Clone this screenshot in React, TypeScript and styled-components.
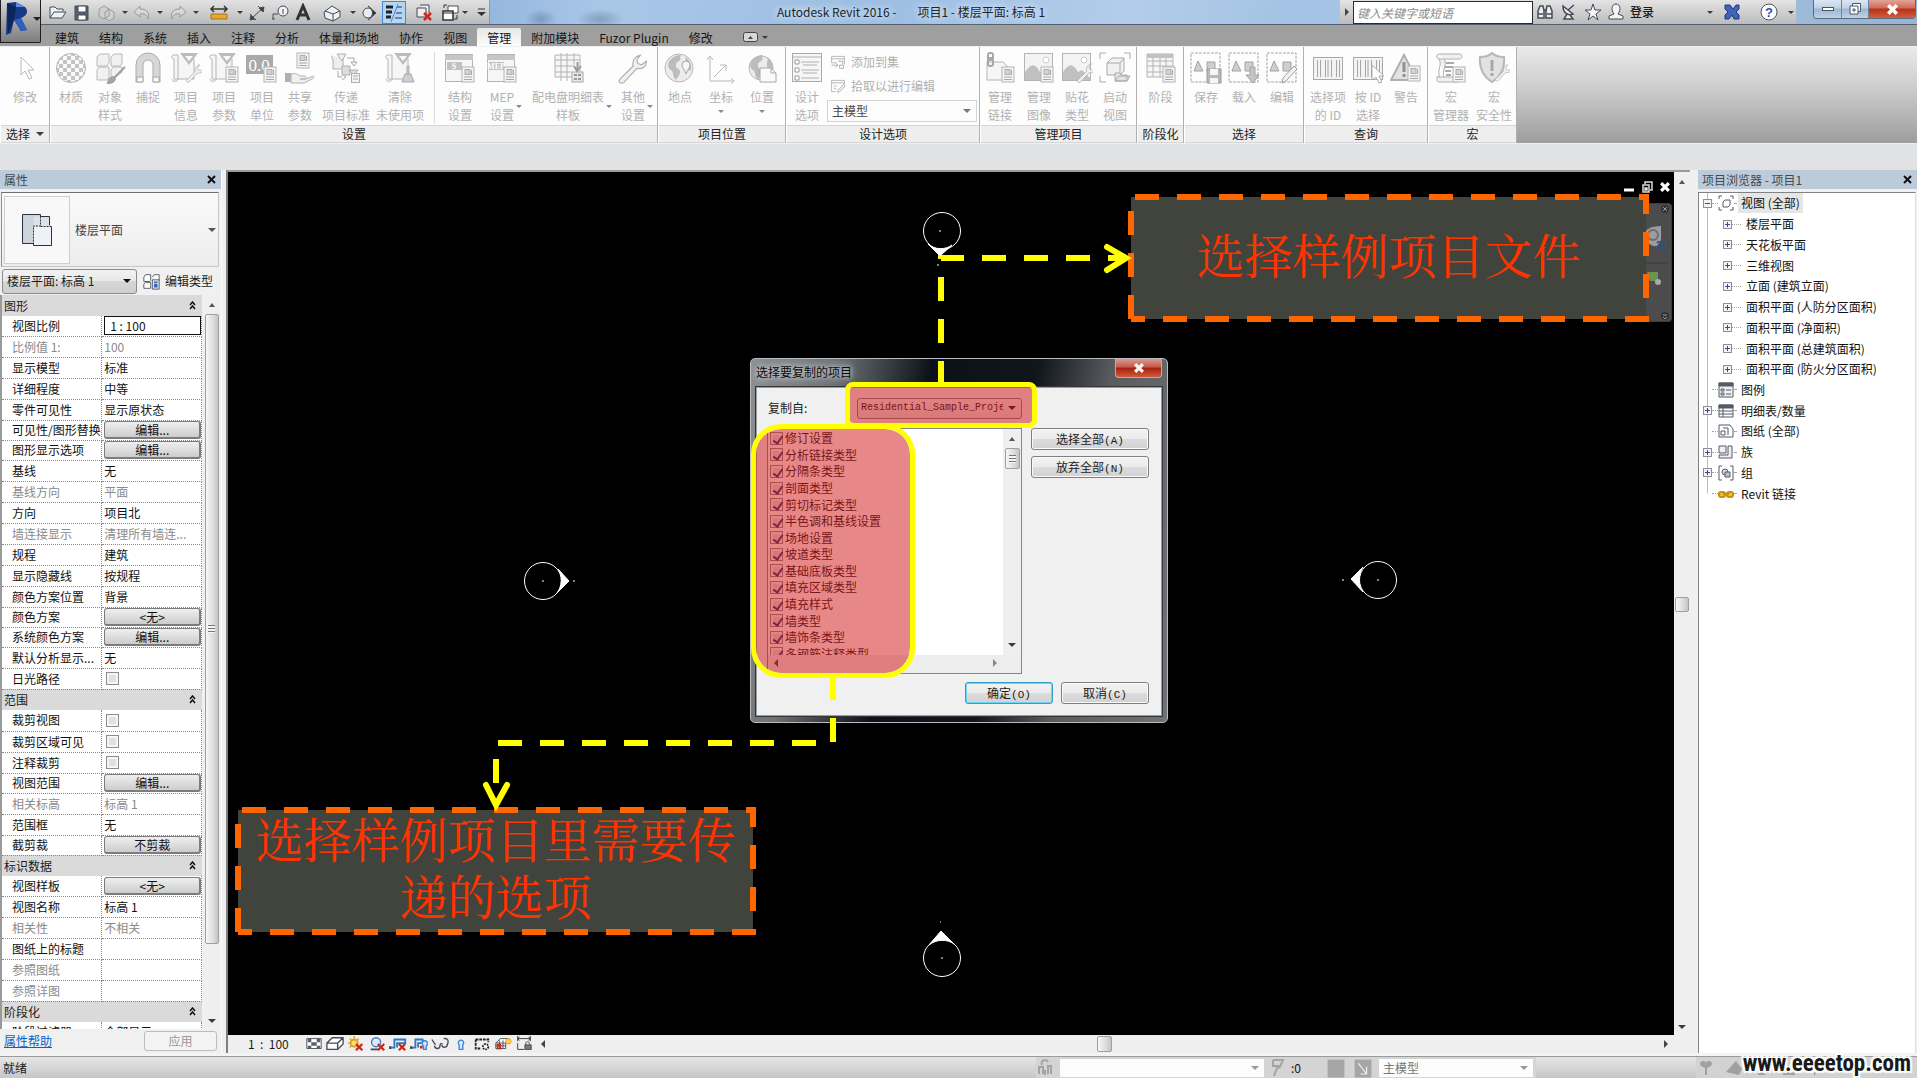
import React from "react";
import styled, { createGlobalStyle, css } from "styled-components";

const ui = `"Noto Sans CJK SC", "Noto Sans", sans-serif`;
const mono = `"Liberation Mono", "Noto Sans CJK SC", monospace`;

const Global = createGlobalStyle`
  * { box-sizing: border-box; }
  html, body { margin: 0; background: #fff; }
  body { font: 12px/18px ${ui}; color: #1c1c1c; }
  button, input, select { font: inherit; color: inherit; margin: 0; }
  svg { display: block; flex: none; }
  ul { list-style: none; margin: 0; padding: 0; }
`;

const Shell = styled.div`
  height: 100vh;
  padding: 0 3px 2px 0;
  display: flex;
  flex-direction: column;
  overflow: hidden;
`;

/* ---------- shared bits ---------- */

const Caret = styled.i<{ $c?: string; $big?: boolean }>`
  flex: none;
  width: 0;
  height: 0;
  border: ${(p) => (p.$big ? 4 : 3)}px solid transparent;
  border-top-color: ${(p) => p.$c || "#3c3c3c"};
  border-bottom: 0;
`;
const CaretUp = styled(Caret)`
  border-top: 0;
  border-bottom: 4px solid #555;
`;
const CaretLeft = styled.i`
  width: 0;
  height: 0;
  border: 4px solid transparent;
  border-right-color: #444;
  border-left: 0;
`;
const CaretRight = styled.i<{ $c?: string }>`
  width: 0;
  height: 0;
  border: 4px solid transparent;
  border-left-color: ${(p) => p.$c || "#444"};
  border-right: 0;
`;

const GhostButton = styled.button<{ $w?: number }>`
  flex: none;
  width: ${(p) => p.$w || 24}px;
  height: 100%;
  padding: 0;
  border: 0;
  background: none;
  display: flex;
  align-items: center;
  justify-content: center;
`;

const SelectWrap = styled.span<{ $w?: string }>`
  position: relative;
  display: flex;
  align-items: center;
  width: ${(p) => p.$w || "100%"};
  & > i {
    position: absolute;
    right: 6px;
    pointer-events: none;
  }
`;
const Select = styled.select<{ $look?: "flat" | "raised" | "mono"; $h?: number }>`
  appearance: none;
  width: 100%;
  height: ${(p) => p.$h || 22}px;
  padding: 0 18px 0 4px;
  border: 1px solid #d4d4d4;
  border-radius: 0;
  background: #fcfcfc;
  outline: 0;
  overflow: hidden;
  ${(p) =>
    p.$look === "raised" &&
    css`
      border: 1px solid #8a8a8a;
      border-radius: 3px;
      background: linear-gradient(#f2f2f2, #e8e8e8 50%, #d6d6d6 50%, #cfcfcf);
    `}
  ${(p) =>
    p.$look === "mono" &&
    css`
      padding-left: 3px;
      font: 10px/14px ${mono};
      border: 1px solid #808080;
      border-radius: 3px;
      background: linear-gradient(#f2f2f2, #e2e2e2);
    `}
`;

/* ---------- header ---------- */

const Header = styled.header`
  display: grid;
  grid-template-columns: 41px 1fr;
  grid-template-rows: 25px 21px;
  flex: none;
  background: #9f9f9f;
`;
const AppButton = styled.button`
  grid-row: 1 / 3;
  height: 43px;
  border: 1px solid #1f1f1f;
  border-top: 0;
  border-radius: 0 0 2px 0;
  padding: 0 0 4px 4px;
  display: flex;
  align-items: center;
  gap: 2px;
  background: linear-gradient(#d9d9d9, #a8a8a8 50%, #7d7d7d);
`;
const TitleBar = styled.div`
  display: flex;
  min-width: 0;
  border-bottom: 1px solid #55606e;
  background:
    radial-gradient(closest-side, rgba(60, 85, 120, 0.35), transparent) 484px 9px / 32px 20px no-repeat,
    radial-gradient(closest-side, rgba(60, 85, 120, 0.35), transparent) 536px 9px / 46px 20px no-repeat,
    linear-gradient(100deg, #8fb3dc 22%, #a9c6e7 30%, #9dbee2 45%, #b3cdea 58%, #a4c3e4 66%, #aac7e6 80%, #98b4d2);
`;
const Quick = styled.div`
  display: flex;
  width: 449px;
  flex: none;
  padding: 1px 0 0 5px;
  background: linear-gradient(#e2e2e2, #cfcfcf 50%, #b9b9b9);
  border-right: 1px solid #8c99a8;
`;
const QuickOn = styled(GhostButton)`
  background: #b5d5f5;
  border: 1px solid #3f87d9;
`;
const Vr = styled.span`
  width: 1px;
  margin: 2px 0;
  background: #aeaeae;
`;
const Title = styled.h1`
  flex: 1;
  margin: 0;
  padding-right: 8px;
  font: inherit;
  display: flex;
  justify-content: center;
  align-items: center;
  gap: 21px;
  white-space: nowrap;
  color: #1c232b;
  text-shadow: 0 0 6px #dcebfa, 0 0 8px #dcebfa;
`;
const Info = styled.div`
  display: flex;
  align-items: center;
  flex: none;
  width: 456px;
  padding-left: 5px;
  background: linear-gradient(#e4e4e4, #cfcfcf 50%, #bcbcbc);
`;
const Search = styled.input`
  width: 180px;
  height: 23px;
  margin-left: 4px;
  padding: 0 3px;
  border: 1px solid #2b2b2b;
  background: #fff;
  font-style: italic;
  outline: 0;
  &::placeholder { color: #8a8a8a; opacity: 1; }
`;
const SignIn = styled(GhostButton)`
  width: auto;
  gap: 4px;
  margin-left: 1px;
  font-weight: 500;
`;
const Push = styled.span`
  flex: 1;
`;
const WinButtons = styled.div`
  display: flex;
  flex: none;
  height: 19px;
  margin: 0 1px 0 17px;
  border: 1px solid #5a6b80;
  border-top: 0;
  border-radius: 0 0 4px 4px;
  overflow: hidden;
`;
const WinBtn = styled.button<{ $w: number; $red?: boolean }>`
  width: ${(p) => p.$w}px;
  padding: 0;
  border: 0;
  border-right: ${(p) => (p.$red ? "0" : "1px solid #71839a")};
  display: flex;
  align-items: center;
  justify-content: center;
  background: ${(p) =>
    p.$red
      ? "linear-gradient(#e0a598, #cf6a58 45%, #b92f1a 50%, #d06040)"
      : "linear-gradient(#dbe6f3, #bfd0e4 45%, #9fb6d0 50%, #bed3ea)"};
`;

const Tabs = styled.nav`
  display: flex;
  align-items: flex-end;
  padding-left: 4px;
`;
const Tab = styled.button<{ $on?: boolean }>`
  height: 18px;
  padding: 0 10px;
  border: 0;
  border-radius: 2px 2px 0 0;
  line-height: 17px;
  color: #161616;
  background: ${(p) => (p.$on ? "linear-gradient(#e6e6e6, #fdfdfd)" : "none")};
`;
const TabToggle = styled.button`
  border: 0;
  background: none;
  height: 18px;
  padding: 0 10px;
  margin-left: 10px;
  display: flex;
  align-items: center;
  gap: 4px;
`;

/* ---------- ribbon ---------- */

const Ribbon = styled.div`
  display: flex;
  flex: none;
  height: 98px;
  border-top: 1px solid #efefef;
  border-bottom: 1px solid #efefef;
  background: linear-gradient(#e9e9e9, #cfcfcf 40%, #9d9d9d);
`;
const Panel = styled.section<{ $w: number }>`
  flex: none;
  width: ${(p) => p.$w}px;
  display: flex;
  flex-direction: column;
  border-right: 1px solid #b0b0b0;
  border-left: 1px solid #fff;
  background: #fdfdfd;
`;
const PanelBody = styled.div`
  flex: 1;
  display: flex;
  padding-top: 5px;
  min-height: 0;
`;
const PanelTitle = styled.h2`
  margin: 0;
  height: 18px;
  font: 12px/16px ${ui};
  color: #222;
  background: #eeeeee;
  border-top: 1px solid #d6d6d6;
  border-bottom: 1px solid #d6d6d6;
  display: flex;
  justify-content: center;
  align-items: center;
  gap: 6px;
`;
const Tool = styled.button<{ $w: number }>`
  flex: none;
  width: ${(p) => p.$w}px;
  padding: 0;
  border: 0;
  background: none;
  color: #b2b2b2;
  display: flex;
  flex-direction: column;
  align-items: center;
  gap: 4px;
`;
const ToolLabel = styled.span`
  display: flex;
  align-items: center;
  white-space: pre;
  text-align: center;
  & > i {
    margin: 0 -8px 0 2px;
  }
`;
const Split = styled.span`
  width: 1px;
  margin: 0 6px 2px 7px;
  background: #d9d9d9;
`;
const OptionStack = styled.div`
  display: flex;
  flex-direction: column;
  width: 150px;
  gap: 4px;
  color: #b0b0b0;
  & select { color: #4a4a4a; }
`;
const SmallTool = styled.button`
  height: 20px;
  border: 0;
  padding: 0 3px;
  background: none;
  color: inherit;
  display: flex;
  align-items: center;
  gap: 5px;
`;
const OptionsBar = styled.div`
  flex: none;
  height: 26px;
  background: #e1e2e4;
`;

/* ---------- work area ---------- */

const Main = styled.main`
  flex: 1;
  min-height: 0;
  display: flex;
  background: #f0f0f0;
  border-bottom: 3px solid #f4f4f4;
`;
const PaletteHead = styled.div`
  display: flex;
  align-items: center;
  justify-content: space-between;
  height: 19px;
  flex: none;
  padding: 0 0 0 4px;
  color: #44494f;
  background: #bccbda;
`;
const Properties = styled.aside`
  width: 222px;
  margin-right: 4px;
  flex: none;
  display: flex;
  flex-direction: column;
  border-right: 1px solid #fafafa;
`;
const TypeBox = styled.button`
  margin: 3px 2px 0 1px;
  height: 75px;
  flex: none;
  padding: 3px 2px;
  display: flex;
  align-items: center;
  gap: 5px;
  color: #444;
  border: 1px solid #c8c8c8;
  border-top-color: #6f6f6f;
  border-left-color: #8f8f8f;
  background: linear-gradient(#fafafa, #ececec);
  text-align: left;
  & > span { flex: 1; }
`;
const TypeThumb = styled.i`
  width: 66px;
  height: 68px;
  border: 1px solid #cfcfcf;
  background: #f8f8f8;
  display: flex;
  align-items: center;
  justify-content: center;
`;
const Instance = styled.div`
  display: flex;
  align-items: center;
  height: 28px;
  flex: none;
  padding-left: 2px;
  gap: 6px;
`;
const EditType = styled.button`
  border: 0;
  padding: 0;
  background: none;
  display: flex;
  align-items: center;
  gap: 5px;
  flex: none;
`;
const GridArea = styled.div`
  flex: 1;
  min-height: 0;
  display: flex;
  border-left: 2px solid #9a9a9a;
  overflow: hidden;
`;
const GridClip = styled.div`
  width: 200px;
  overflow: hidden;
  background: #fff;
`;
const PropTable = styled.table`
  width: 100%;
  border-collapse: collapse;
  table-layout: fixed;
`;
const PropRow = styled.tr<{ $h: number; $dim?: boolean }>`
  height: ${(p) => p.$h}px;
  color: ${(p) => (p.$dim ? "#8a8a8a" : "#111")};
  & > th, & > td {
    padding: 0;
    font-weight: 400;
    text-align: left;
    line-height: 18px;
    white-space: nowrap;
    overflow: hidden;
    border-bottom: 1px dotted #8a8a8a;
    border-right: 1px dotted #8a8a8a;
  }
  & > th { padding-left: 10px; }
  & > td { padding-left: 2px; }
`;
const GroupRow = styled.tr`
  height: 21px;
  background: #dadada;
  & > th {
    padding: 0 6px 0 2px;
    font-weight: 400;
    text-align: left;
    line-height: 18px;
    & > div { display: flex; justify-content: space-between; align-items: center; }
  }
`;
const CellButton = styled.button`
  display: block;
  width: 97px;
  height: 18px;
  padding: 0;
  line-height: 16px;
  border: 1px solid #7c7c7c;
  border-right-width: 2px;
  border-bottom-width: 2px;
  border-radius: 3px;
  background: linear-gradient(#efefef, #dedede 50%, #cccccc);
`;
const CellInput = styled.input`
  display: block;
  width: 97px;
  height: 19px;
  padding: 0 5px;
  border: 1px solid #111;
  outline: 0;
  background: #fff;
`;
const Tick = styled.input`
  appearance: none;
  display: block;
  flex: none;
  width: 13px;
  height: 13px;
  border: 1px solid #8c8c8c;
  background: #dfe1e4;
  box-shadow: inset 0 0 0 2px #f6f6f6;
  position: relative;
  &:checked::after {
    content: "";
    position: absolute;
    left: 4px;
    top: 1px;
    width: 4px;
    height: 8px;
    border: solid #2b3a7c;
    border-width: 0 2px 2px 0;
    transform: rotate(35deg);
  }
`;
const TickCell = styled.span`
  display: block;
  padding-left: 2px;
`;
const VScroll = styled.div<{ $w: number }>`
  width: ${(p) => p.$w}px;
  flex: none;
  display: flex;
  flex-direction: column;
  align-items: center;
  justify-content: space-between;
  padding: 8px 0 6px;
  background: #efefef;
`;
const Thumb = styled.span<{ $w: number; $h: number }>`
  width: ${(p) => p.$w}px;
  height: ${(p) => p.$h}px;
  flex: none;
  border: 1px solid #a0a0a0;
  border-radius: 2px;
  background: linear-gradient(90deg, #f7f7f7, #dcdcdc 60%, #c4c4c4);
  display: flex;
  align-items: center;
  justify-content: center;
`;
const Grip = styled.span`
  width: 7px;
  height: 8px;
  background: repeating-linear-gradient(#777 0 1px, #f4f4f4 1px 3px);
`;
const PropScroll = styled(VScroll)`
  margin-left: 2px;
  justify-content: flex-start;
  gap: 7px;
  & > i:last-child { margin-top: auto; }
`;
const PropFoot = styled.div`
  display: flex;
  justify-content: space-between;
  align-items: center;
  height: 24px;
  flex: none;
  padding: 0 4px;
`;
const Help = styled.a`
  color: #0a62c9;
`;
const Apply = styled.button`
  width: 73px;
  height: 20px;
  padding: 0;
  line-height: 16px;
  color: #9a9a9a;
  border: 1px solid #bcbcbc;
  border-radius: 3px;
  background: #f3f3f3;
`;

const ViewFrame = styled.section`
  flex: 1;
  min-width: 0;
  display: grid;
  grid-template-columns: minmax(0, 1fr) 16px;
  grid-template-rows: minmax(0, 1fr) 18px;
  border-left: 2px solid #808080;
  border-top: 2px solid #9a9a9a;
`;
const Canvas = styled.div`
  position: relative;
  background: #000;
  overflow: hidden;
`;
const Drawing = styled.svg`
  position: absolute;
  left: 0;
  top: 0;
`;
const MdiButtons = styled.div`
  position: absolute;
  top: 6px;
  right: 0;
  display: flex;
  height: 18px;
`;
const NavBar = styled.div`
  position: absolute;
  top: 31px;
  right: 2px;
  width: 32px;
  height: 119px;
  border-radius: 4px;
  border: 1px solid #3c3c3c;
  border-left: 5px solid #77796f;
  background: #4c4c4c;
`;
const ViewBar = styled.div`
  grid-column: 1 / 3;
  display: flex;
  align-items: center;
  background: #efefef;
`;
const ScaleText = styled.button`
  width: 62px;
  padding: 0 0 0 20px;
  border: 0;
  background: none;
  text-align: left;
  white-space: pre;
  flex: none;
  margin-right: 13px;
`;
const HScroll = styled.div`
  flex: 1;
  display: flex;
  align-items: center;
  justify-content: space-between;
  padding: 0 22px 0 7px;
  height: 100%;
`;

/* ---------- dialog ---------- */

const Dialog = styled.section`
  position: absolute;
  left: 522px;
  top: 186px;
  width: 418px;
  height: 365px;
  border: 1px solid #b9bcc0;
  border-radius: 5px;
  padding: 0 5px 6px;
  display: flex;
  flex-direction: column;
  background: linear-gradient(100deg, #8d9093 0, #6e7275 18%, #0c1117 38%, #11161b 60%, #5a5d60 76%, #6f7376 100%);
`;
const DialogHead = styled.div`
  height: 28px;
  flex: none;
  display: flex;
  align-items: flex-start;
  justify-content: space-between;
  color: #0a0a0a;
  & > h3 {
    margin: 4px 0 0 0;
    font: 12px/18px ${ui};
    text-shadow: 0 0 6px #c4c7ca, 0 0 10px #b9bcbf, 0 0 4px #c4c7ca;
  }
`;
const CloseRed = styled.button`
  width: 47px;
  height: 19px;
  padding: 0;
  display: flex;
  align-items: center;
  justify-content: center;
  border: 1px solid #c9a6a2;
  border-top: 0;
  border-radius: 0 0 4px 4px;
  background: linear-gradient(#d89a90, #c65a4a 45%, #a5200f 50%, #cf5a3a);
`;
const DialogBody = styled.div`
  flex: 1;
  min-height: 0;
  border: 1px solid #9a9da0;
  outline: 1px solid #33373b;
  background: #f0f0f0;
  display: grid;
  grid-template-columns: 255px 118px;
  grid-template-rows: 30px 246px 22px;
  column-gap: 9px;
  row-gap: 8px;
  padding: 2px 0 0 10px;
`;
const FromRow = styled.label`
  display: flex;
  align-items: center;
  justify-content: space-between;
  padding: 6px 0 0 1px;
`;
const SideButtons = styled.div`
  grid-column: 2;
  grid-row: 2;
  display: flex;
  flex-direction: column;
  gap: 6px;
`;
const DialogButton = styled.button<{ $w?: number; $main?: boolean }>`
  width: ${(p) => p.$w || 118}px;
  height: 22px;
  padding: 0;
  line-height: 18px;
  border: 1px solid ${(p) => (p.$main ? "#2f9fcb" : "#7f7f7f")};
  border-radius: 3px;
  box-shadow: ${(p) => (p.$main ? "inset 0 0 0 1px #6fd3f5" : "inset 0 0 0 1px #fafafa")};
  background: linear-gradient(#f2f2f2, #ebebeb 50%, #dcdcdc 50%, #d2d2d2);
  & > span { font: 11px/14px ${mono}; }
`;
const ListBox = styled.div`
  grid-row: 2;
  display: grid;
  grid-template-columns: 1fr 18px;
  grid-template-rows: 226px 1fr;
  border: 1px solid #828790;
  background: #fff;
  overflow: hidden;
`;
const ListClip = styled.div`
  overflow: hidden;
  padding: 1px 0 0 2px;
`;
const CheckList = styled.ul`
  height: 232px;
  display: flex;
  flex-direction: column;
  & > li {
    flex: 1;
    min-height: 0;
  }
  & label {
    display: flex;
    align-items: center;
    gap: 2px;
    height: 100%;
    line-height: 16px;
    white-space: nowrap;
  }
`;
const ListH = styled.div`
  grid-column: 1 / 3;
  display: flex;
  align-items: center;
  justify-content: space-between;
  padding: 0 24px 2px 6px;
  background: #ededed;
`;
const ListV = styled(VScroll)`
  justify-content: flex-start;
  gap: 7px;
  padding-bottom: 8px;
  & > i:last-child { margin-top: auto; }
`;
const Footer = styled.div`
  grid-column: 1 / 3;
  grid-row: 3;
  display: flex;
  justify-content: flex-end;
  gap: 8px;
`;

/* ---------- annotations ---------- */

const Mark = styled.div<{ $x: number; $y: number; $w: number; $h: number; $r: number }>`
  position: absolute;
  left: ${(p) => p.$x}px;
  top: ${(p) => p.$y}px;
  width: ${(p) => p.$w}px;
  height: ${(p) => p.$h}px;
  border: 5px solid #ffff00;
  border-radius: ${(p) => p.$r}px;
  background: rgba(208, 16, 16, 0.5);
  background-clip: padding-box;
  pointer-events: none;
`;
const Callout = styled.div<{ $x: number; $y: number }>`
  position: absolute;
  left: ${(p) => p.$x}px;
  top: ${(p) => p.$y}px;
  width: 515px;
  height: 122px;
  padding: 0 10px 10px;
  display: flex;
  align-items: center;
  justify-content: center;
  text-align: center;
  color: #ff3300;
  background: #41443c;
  font: 400 48px/57px "Noto Serif CJK SC", "Noto Sans CJK SC", serif;
  & > svg { position: absolute; left: -3px; top: -3px; }
`;

/* ---------- project browser ---------- */

const Browser = styled.aside`
  width: 219px;
  margin-left: 8px;
  flex: none;
  display: flex;
  flex-direction: column;
`;
const TreeBox = styled.div`
  flex: 1;
  margin: 3px 1px 0 0;
  padding: 0 0 0 3px;
  border: 1px solid #828282;
  border-right-color: #e0e0e0;
  border-bottom: 0;
  background: #fff;
`;
const Tree = styled.ul`
  height: 311px;
  display: flex;
  flex-direction: column;
`;
const Node = styled.li<{ $last?: boolean }>`
  flex: 1;
  min-height: 0;
  display: flex;
  align-items: center;
  color: #111;
  background: linear-gradient(#bbb, #bbb) 5px 0 / 1px ${(p) => (p.$last ? "50%" : "100%")} no-repeat;
`;
const Indent = styled.span`
  width: 20px;
  flex: none;
`;
const Expander = styled.button<{ $leaf?: boolean }>`
  width: 9px;
  height: 9px;
  flex: none;
  padding: 0;
  margin-left: 1px;
  border: ${(p) => (p.$leaf ? "0" : "1px solid #8f8f8f")};
  background: ${(p) => (p.$leaf ? "none" : "#f4f4f4")};
  visibility: ${(p) => (p.$leaf ? "hidden" : "visible")};
`;
const Twig = styled.span<{ $w: number }>`
  width: ${(p) => p.$w}px;
  flex: none;
  border-top: 1px dotted #a5a5a5;
`;
const NodeText = styled.span<{ $on?: boolean }>`
  padding: 0 3px;
  margin-left: 2px;
  line-height: 20px;
  white-space: nowrap;
  background: ${(p) => (p.$on ? "#e6e6e6" : "none")};
`;

/* ---------- status bar ---------- */

const Status = styled.footer`
  flex: none;
  height: 22px;
  display: flex;
  align-items: center;
  padding: 0 0 0 3px;
  border-top: 1px solid #9b9b9b;
  background: linear-gradient(#e6e6e6, #c6c6c6);
  position: relative;
`;
const StatusTools = styled.div`
  display: flex;
  align-items: center;
  height: 100%;
  gap: 3px;
  width: 500px;
  color: #777;
  background: #d4d4d4;
  margin-right: 160px;
`;
const StatusCount = styled.span`
  width: 30px;
  color: #111;
`;
const StatusRight = styled.div`
  display: flex;
  align-items: center;
  gap: 8px;
  width: 221px;
  height: 100%;
  background: #d2d2d2;
`;
const Watermark = styled.a`
  position: absolute;
  right: 6px;
  bottom: 2px;
  color: #1a1a1a;
  font: 700 23px/24px "Roboto Condensed", "Liberation Sans Narrow", Roboto, "Liberation Sans", sans-serif;
  text-decoration: none;
  text-shadow: 1px 0 #fff, -1px 0 #fff, 0 1px #fff, 0 -1px #fff, 2px 2px 1px #fff, -2px -2px 1px #fff, 2px -2px 1px #fff, -2px 2px 1px #fff;
`;

/* ---------- drawings ---------- */

const Badge = ({ x = 18, y = 15 }: { x?: number; y?: number }) => (
  <g transform={`translate(${x} ${y})`}>
    <rect x="0" y="0" width="12" height="15" fill="#f4f4f4" stroke="#b4b4b4" />
    <rect x="3" y="2.500" width="5" height="5" fill="#d4d4d4" stroke="#adadad" />
    <path d="M9.500 3v5M2 10h8M2 12.500h8" stroke="#a8a8a8" />
  </g>
);
const Wrench = ({ t }: { t?: string }) => (
  <path
    transform={t}
    d="M0 21l11-11c-1-4 1-8 6-9l-3 4 1 3 3 1 4-3c0 5-4 7-8 6L3 24c-3 1-5-1-3-3z"
    fill="#f0f0f0"
    stroke="#b0b0b0"
  />
);
const Scroll = () => (
  <>
    <path d="M4 3c-3 0-3 4 0 4v20h20V7" fill="#f6f6f6" stroke="#b4b4b4" />
    <path d="M4 3h4v24c0 3-6 3-6 0" fill="none" stroke="#b4b4b4" />
    <path d="M10 1h18l-9 12z" fill="#bdbdbd" />
    <path d="M15 4h8l-4 5z" fill="#fafafa" />
  </>
);
const Shapes = () => (
  <>
    <rect x="1" y="1" width="29" height="29" fill="none" stroke="#a8a8a8" strokeDasharray="3 1" />
    <path d="M4 19l4-10 5 10zM17 10h8v9h-8z" fill="#cfcfcf" stroke="#a2a2a2" />
  </>
);
const Globe = ({ r = 14 }: { r?: number }) => (
  <>
    <circle cx="15" cy="16" r={r} fill="#ececec" stroke="#b8b8b8" />
    <path d="M6 8c4-4 8-5 11-5-2 3 1 4-2 6s-3 2-3 5 4 2 4 6-3 5-4 8c-4-4-2-8-5-10-3-1-4-6-1-10zM21 5c4 2 7 7 6 13-3 2-5 0-6-4s2-5 0-9z" fill="#bcbcbc" />
  </>
);
const Picture = () => (
  <>
    <rect x="1.500" y="1.500" width="28" height="27" fill="#f3f3f3" stroke="#b4b4b4" />
    <circle cx="23" cy="8" r="3" fill="#fff" stroke="#ccc" />
    <path d="M2 20c6-9 10-9 15 0l4-2 8 8v2H2z" fill="#c0c0c0" />
  </>
);
const Bars = () => (
  <>
    <rect x="1.500" y="5.500" width="29" height="22" fill="#f3f3f3" stroke="#a8a8a8" />
    <path d="M5.500 8v17M8.500 8v17M13.500 8v17M16 8v17M19.500 8v17M24.500 8v17M27.500 8v17" stroke="#a6a6a6" />
  </>
);
const Sheet = ({ text }: { text: string }) => (
  <>
    <rect x="1.500" y="2.500" width="27" height="27" fill="#f6f6f6" stroke="#b4b4b4" />
    <path d="M1 3h28v5H1z" fill="#c6c6c6" />
    <rect x="3" y="10" width="15" height="8" fill="#c2c2c2" />
    <text x="10" y="17" fontSize="8" fontWeight="700" textAnchor="middle" fill="#fff" fontFamily="Liberation Serif, serif">{text}</text>
  </>
);

const ribbonArt: Record<string, React.ReactNode> = {
  cursor: <path d="M12 5v18l4-4 4 8 3-1-4-8h6z" fill="#fff" stroke="#b8b8b8" />,
  material: (
    <>
      <defs>
        <pattern id="chk" width="8" height="8" patternUnits="userSpaceOnUse">
          <path d="M0 0h4v4H0zM4 4h4v4H4z" fill="#c4c4c4" />
        </pattern>
      </defs>
      <circle cx="16" cy="16" r="14.500" fill="#fafafa" />
      <circle cx="16" cy="16" r="14.500" fill="url(#chk)" stroke="#b4b4b4" />
    </>
  ),
  objects: (
    <>
      <path d="M3 5l3-3h9v9l-2 3H3zM17 5l3-3h8v9l-2 3h-9zM3 18l2-3h10v10l-2 3H3zM17 18l2-3h9v5l-8 6h-3z" fill="#f1f1f1" stroke="#b8b8b8" />
      <path d="M31 15L20 26M14 31c1-5 3-6 6-6l1 2c-1 3-3 4-7 4z" stroke="#a0a0a0" strokeWidth="2" fill="#aaa" />
    </>
  ),
  magnet: (
    <>
      <path d="M4 30V13a12 12 0 0 1 24 0v17h-7V13a5 5 0 0 0-10 0v17z" fill="#d8d8d8" stroke="#aaa" />
      <path d="M5 25h6v5H5zM21 25h6v5h-6z" fill="#f8f8f8" stroke="#aaa" />
    </>
  ),
  info: (<><Scroll /><Wrench t="translate(17 12) scale(.75)" /></>),
  params: (<><Scroll /><Badge /></>),
  units: (
    <>
      <path d="M0 3h27v19H0z" fill="#a9a9a9" />
      <text x="13" y="19" fontSize="17" textAnchor="middle" fill="#fff" fontFamily="Liberation Serif, serif">0.0</text>
      <Badge />
    </>
  ),
  shared: (
    <>
      <Badge x={13} y={1} />
      <path d="M1 21h6v9H1z" fill="#b0b0b0" />
      <path d="M7 22c5-1 6 0 9 2h5c2 1 1 3-1 3h-4 6l7-3c2 1 1 2-1 3l-8 4H7z" fill="#f0f0f0" stroke="#b0b0b0" />
    </>
  ),
  transfer: (
    <>
      <path d="M3 4c-2 0-2 3 0 3v10h10V6M7 2h9l-4 7z" fill="#eee" stroke="#b0b0b0" />
      <path d="M17 6h7v4M24 14l-3-4h6zM8 19v6h4M12 22l4 3-4 3" fill="none" stroke="#a6a6a6" />
      <path d="M19 18h9l-4 6zM12 14h8v9h-8z" fill="#ddd" stroke="#b0b0b0" />
      <rect x="21.500" y="21.500" width="8" height="9" fill="#f4f4f4" stroke="#b0b0b0" />
      <path d="M23 24h5M23 27h5" stroke="#aaa" />
    </>
  ),
  purge: (<><Scroll /><path d="M23 14h2v8h-2zM21 22h6l3 8H18z" fill="#cfcfcf" stroke="#aaa" /></>),
  struct: (<><Sheet text="S" /><Badge /></>),
  mep: (<><Sheet text="MEP" /><Badge /></>),
  schedule: (
    <>
      <path d="M3 3h25v22H3zM3 8h25M3 14h18M3 20h16M9 1v28M15 1v28M22 1v12" fill="#f6f6f6" stroke="#b2b2b2" />
      <rect x="20" y="20" width="11" height="10" fill="#e8e8e8" stroke="#aaa" />
      <path d="M25.500 10v9M22 14l3 5 4-5M22 23h3M26 23h3M22 27h3M26 27h3" fill="none" stroke="#999" strokeWidth="2" />
    </>
  ),
  wrench: <Wrench t="translate(3 2) scale(1.200)" />,
  globe: (<><Globe /><path d="M22 22c-1-4-4-6-4-9a4 4 0 0 1 8 0c0 3-3 5-4 9z" fill="#f6f6f6" stroke="#aaa" /></>),
  coords: <path d="M5 6v23h23M2 8l3-4 3 4M26 26l3 3-3 3M9 25L21 13M15 13h6v6" fill="none" stroke="#b8b8b8" />,
  position: (<><Globe r={12} /><path d="M14 16h11l5 5v9H14z" fill="#fafafa" stroke="#aaa" /><path d="M25 16v5h5" fill="none" stroke="#aaa" /></>),
  design: (
    <>
      <rect x="1.500" y="1.500" width="29" height="28" fill="#f6f6f6" stroke="#aaa" />
      <path d="M1 5h30M10 10h18M10 18h18M10 26h18M12 13h14M12 21h14" stroke="#b0b0b0" />
      <path d="M4 8h4v4H4zM4 16h4v4H4zM4 24h4v4H4z" fill="#fff" stroke="#999" />
    </>
  ),
  link: (<><path d="M3 10h16l6 6v12H3z" fill="#f6f6f6" stroke="#b4b4b4" /><rect x="4" y="1" width="5" height="7" rx="2" fill="none" stroke="#a8a8a8" strokeWidth="2" /><rect x="4" y="6" width="5" height="8" rx="2" fill="none" stroke="#a8a8a8" strokeWidth="2" /><Badge /></>),
  image: (<><Picture /><Badge /></>),
  decal: (<><Picture /><Wrench t="translate(17 11) scale(.8)" /></>),
  startview: (
    <>
      <path d="M8 11l5-5h12v13l-4 4H8z" fill="#f1f1f1" stroke="#aaa" />
      <path d="M1 7V1h6M25 1h6v6M1 24v6h6M8 11h13v12M21 11l4-5" fill="none" stroke="#aaa" />
      <path d="M16 29v-8h5l1 2h6v6zM16 29l4-5h11l-3 5z" fill="#e2e2e2" stroke="#aaa" />
    </>
  ),
  phase: (<><path d="M2 2h26v23H2zM2 9h26M2 14h26M2 20h26M8 6v19M15 6v19M21 6v19" fill="#f6f6f6" stroke="#b4b4b4" /><path d="M2 2h26v4H2z" fill="#c2c2c2" /><Badge /></>),
  save: (<><Shapes /><path d="M17 17h14v14H17z" fill="#b8b8b8" stroke="#999" /><path d="M20 17h8v6h-8zM20 26h8v5h-8z" fill="#f6f6f6" /></>),
  load: (<><Shapes /><path d="M22 15h5v8h4l-6 8-7-8h4z" fill="#c4c4c4" stroke="#a2a2a2" /></>),
  edit: (<><Shapes /><path d="M17 26L28 14l3 3-11 12-4 2z" fill="#f2f2f2" stroke="#9f9f9f" /></>),
  ids: <Bars />,
  byid: (<><Bars /><path d="M20 13v15l4-3 3 6 3-1-3-6h5z" fill="#fff" stroke="#aaa" /></>),
  warn: (<><path d="M14 3L1 28h26z" fill="#e2e2e2" stroke="#b0b0b0" strokeWidth="2" /><path d="M14 10v10M14 22v3" stroke="#909090" strokeWidth="3" /><Badge x={18} y={14} /></>),
  macro: (
    <>
      <path d="M4 2h20c4 0 4 5 0 5H9c4 6-3 12 0 18M4 2c-3 0-3 5 0 5h5M4 7c4 6-3 12 1 18M1 25h22v5H4c-3 0-3-5 0-5" fill="#f1f1f1" stroke="#b0b0b0" />
      <path d="M11 11h8M10 15h8M10 19h6M11 23h5" stroke="#aaa" strokeWidth="2" />
      <Badge />
    </>
  ),
  shield: (<><path d="M14 1c4 4 8 4 12 4 1 12-4 20-12 25C6 25 1 17 2 5c4 0 8 0 12-4z" fill="#e2e2e2" stroke="#b8b8b8" strokeWidth="2" /><path d="M14 8v11M14 21v3" stroke="#a8a8a8" strokeWidth="3" /><Wrench t="translate(18 12) scale(.7)" /></>),
};
const RibbonIcon = ({ name }: { name: string }) => (
  <svg width="32" height="32" viewBox="0 0 32 32">{ribbonArt[name]}</svg>
);

const Q = ({ children, s = 20 }: { children: React.ReactNode; s?: number }) => (
  <svg width={s} height={s} viewBox="0 0 20 20" fill="none" stroke="#444b57">{children}</svg>
);

/* ---------- data ---------- */

type ToolDef = { i: string; t: string; w: number; d?: "side" | "below" };
const selectTools: ToolDef[] = [{ i: "cursor", t: "修改", w: 48 }];
const setTools: ToolDef[] = [
  { i: "material", t: "材质", w: 40 },
  { i: "objects", t: "对象\n样式", w: 38 },
  { i: "magnet", t: "捕捉", w: 38 },
  { i: "info", t: "项目\n信息", w: 38 },
  { i: "params", t: "项目\n参数", w: 38 },
  { i: "units", t: "项目\n单位", w: 38 },
  { i: "shared", t: "共享\n参数", w: 38 },
  { i: "transfer", t: "传递\n项目标准", w: 54 },
  { i: "purge", t: "清除\n未使用项", w: 54 },
];
const setTools2: ToolDef[] = [
  { i: "struct", t: "结构\n设置", w: 38 },
  { i: "mep", t: "MEP\n设置", w: 46, d: "side" },
  { i: "schedule", t: "配电盘明细表\n样板", w: 86, d: "side" },
  { i: "wrench", t: "其他\n设置", w: 44, d: "side" },
];
const Tools = ({ items }: { items: ToolDef[] }) => (
  <>
    {items.map((x, n) => (
      <Tool key={n} $w={x.w}>
        <RibbonIcon name={x.i} />
        <ToolLabel>
          {x.t}
          {x.d === "side" && <Caret $c="#8a8a8a" />}
        </ToolLabel>
        {x.d === "below" && <Caret $c="#8a8a8a" />}
      </Tool>
    ))}
  </>
);

type Prop = { n: string; v?: string; k?: "btn" | "chk" | "input" | "group"; dim?: boolean };
const props: Prop[] = [
  { n: "图形", k: "group" },
  { n: "视图比例", v: "1 : 100", k: "input" },
  { n: "比例值 1:", v: "100", dim: true },
  { n: "显示模型", v: "标准" },
  { n: "详细程度", v: "中等" },
  { n: "零件可见性", v: "显示原状态" },
  { n: "可见性/图形替换", v: "编辑...", k: "btn" },
  { n: "图形显示选项", v: "编辑...", k: "btn" },
  { n: "基线", v: "无" },
  { n: "基线方向", v: "平面", dim: true },
  { n: "方向", v: "项目北" },
  { n: "墙连接显示", v: "清理所有墙连...", dim: true },
  { n: "规程", v: "建筑" },
  { n: "显示隐藏线", v: "按规程" },
  { n: "颜色方案位置", v: "背景" },
  { n: "颜色方案", v: "<无>", k: "btn" },
  { n: "系统颜色方案", v: "编辑...", k: "btn" },
  { n: "默认分析显示...", v: "无" },
  { n: "日光路径", k: "chk" },
  { n: "范围", k: "group" },
  { n: "裁剪视图", k: "chk" },
  { n: "裁剪区域可见", k: "chk" },
  { n: "注释裁剪", k: "chk" },
  { n: "视图范围", v: "编辑...", k: "btn" },
  { n: "相关标高", v: "标高 1", dim: true },
  { n: "范围框", v: "无" },
  { n: "截剪裁", v: "不剪裁", k: "btn" },
  { n: "标识数据", k: "group" },
  { n: "视图样板", v: "<无>", k: "btn" },
  { n: "视图名称", v: "标高 1" },
  { n: "相关性", v: "不相关", dim: true },
  { n: "图纸上的标题" },
  { n: "参照图纸", dim: true },
  { n: "参照详图", dim: true },
  { n: "阶段化", k: "group" },
  { n: "阶段过滤器", v: "全部显示" },
];

const copyItems = ["修订设置", "分析链接类型", "分隔条类型", "剖面类型", "剪切标记类型", "半色调和基线设置", "场地设置", "坡道类型", "基础底板类型", "填充区域类型", "填充样式", "墙类型", "墙饰条类型", "多钢筋注释类型"];

type TreeDef = { t: string; sub?: boolean; e?: "+" | "-"; icon?: string; on?: boolean };
const tree: TreeDef[] = [
  { t: "视图 (全部)", e: "-", icon: "views", on: true },
  { t: "楼层平面", sub: true, e: "+" },
  { t: "天花板平面", sub: true, e: "+" },
  { t: "三维视图", sub: true, e: "+" },
  { t: "立面 (建筑立面)", sub: true, e: "+" },
  { t: "面积平面 (人防分区面积)", sub: true, e: "+" },
  { t: "面积平面 (净面积)", sub: true, e: "+" },
  { t: "面积平面 (总建筑面积)", sub: true, e: "+" },
  { t: "面积平面 (防火分区面积)", sub: true, e: "+" },
  { t: "图例", icon: "legend" },
  { t: "明细表/数量", e: "+", icon: "sched" },
  { t: "图纸 (全部)", icon: "sheet" },
  { t: "族", e: "+", icon: "family" },
  { t: "组", e: "+", icon: "group" },
  { t: "Revit 链接", icon: "link" },
];
const treeArt: Record<string, React.ReactNode> = {
  views: <path d="M1 4V1h3M12 1h3v3M1 12v3h3M12 15h3v-3M5 7l2-2h5v5l-2 2H5z" />,
  legend: (<><path d="M1 1h14v14H1z" fill="#eee" /><path d="M1 1h14v3H1z" fill="#555c68" /><path d="M3 7h3v2H3zM3 11h3v2H3zM8 8h5M8 12h5" /></>),
  sched: (<><path d="M1 2h14v12H1zM1 8h14M1 11h14M5 5v9" fill="#fff" /><path d="M1 2h14v3H1z" fill="#555c68" /></>),
  sheet: (<><path d="M1 2h11l3 4v8H1z" fill="#fff" /><path d="M3 12V8h4v4zM5 5h5v7" /></>),
  family: <path d="M1 2h7v7H1zM10 2h4v12H1v-3h9z" fill="#eef0f4" />,
  group: (<><path d="M4 1H1v14h3M12 1h3v14h-3" /><circle cx="7" cy="7" r="3" fill="#dde" /><path d="M7 7h5v5H7z" fill="#bcc3cf" /></>),
  link: (<g stroke="#c8900e" strokeWidth="2" fill="#f2c033"><rect x="1" y="6" width="6" height="5" rx="2" /><rect x="9" y="6" width="6" height="5" rx="2" /><path d="M5 8h6" /></g>),
};

const X = ({ c = "#111", w = 2, s = 9 }: { c?: string; w?: number; s?: number }) => (
  <svg width={s} height={s} viewBox="0 0 9 9"><path d="M1 1l7 7M8 1l-7 7" stroke={c} strokeWidth={w} /></svg>
);
const Dashes = () => (
  <svg width="521" height="128" viewBox="-3 -3 521 128" fill="none">
    <path d="M0 122V0H515V122H0" stroke="#ff6600" strokeWidth="6" strokeDasharray="24 18" />
  </svg>
);
const RedX = ({ x = 10, y = 10 }: { x?: number; y?: number }) => (
  <path d={`M${x} ${y}l7 7M${x + 7} ${y}l-7 7`} stroke="#c8281e" strokeWidth="2.500" />
);

const viewIcons: { n: string; art: React.ReactNode }[] = [
  { n: "详细程度", art: <><path d="M2 4h16v11H2z" fill="#fff" /><path d="M3 4h4v4H3zM13 4h4v4h-4zM7 8h6v4H7zM3 12h4v3H3zM13 12h4v3h-4z" fill="#5a616c" stroke="none" /></> },
  { n: "视觉样式", art: <path d="M1 9l6-6h12v7l-6 6H1zM1 9h12v7M13 9l6-6" fill="#fff" strokeWidth="1.500" /> },
  { n: "日光路径", art: <><circle cx="8" cy="9" r="4" fill="#ffe07a" stroke="#e0a020" strokeWidth="2" /><path d="M8 1v3M1 9h3M3 4l2 2M13 4l-2 2M3 14l2-2" stroke="#e0a020" strokeWidth="1.500" /><RedX /></> },
  { n: "阴影", art: <><circle cx="9" cy="8" r="5" fill="#dbeafa" stroke="#3d7fc4" strokeWidth="1.500" /><path d="M3 16h8" strokeWidth="2" /><RedX x={11} /></> },
  { n: "裁剪视图", art: <><path d="M3 14h3V5h12v5M9 14V9h9" stroke="#2b78c0" strokeWidth="2" /><path d="M0 14h3" strokeWidth="3" /><RedX x={11} /></> },
  { n: "显示裁剪区域", art: <><path d="M3 14h3V5h8v4M9 14V9h4" stroke="#2b78c0" strokeWidth="2" /><path d="M0 14h3" strokeWidth="3" /><path d="M11 12h3v3h-3z" fill="#c8281e" stroke="none" /><path d="M15 12a3 3 0 1 1 3 0v4h-3z" fill="#d5e8fb" stroke="#3d86d8" strokeWidth="1.500" /></> },
  { n: "解锁三维视图", art: <path d="M1 5l4 6M14 4c5-1 6 3 4 7M4 12a3 3 0 1 0 6 0c0-2 1-3 3-2M12 11a3 3 0 1 0 6-1" strokeWidth="1.500" /> },
  { n: "临时隐藏/隔离", art: <path d="M8 11a3 3 0 1 1 4 0v5H8z" fill="#d5e8fb" stroke="#3d86d8" strokeWidth="1.500" /> },
  { n: "显示隐藏的图元", art: <><path d="M3 5h14v3M3 5v10h6" strokeDasharray="3 1" strokeWidth="2" stroke="#222" /><circle cx="14" cy="13" r="3" fill="#fff" stroke="#222" strokeWidth="2" strokeDasharray="2 1" /></> },
  { n: "临时视图属性", art: <><path d="M2 9l5-5h9l-3 5v6H2zM2 9h11M2 12h11M6 6v9M10 6v9" fill="#fff" /><path d="M4 16v-5h3v5" stroke="#c8281e" strokeWidth="2" /><circle cx="16" cy="7" r="3" fill="#ffd25a" stroke="#f29a1a" /></> },
  { n: "显示约束", art: <><path d="M3 1v6M17 1v6M3 4h14M5 2L3 4l2 2M15 2l2 2-2 2M3 9v7h7" stroke="#333" /><rect x="11" y="11" width="7" height="5" fill="#777" /><path d="M12 11V9c0-2 4-2 4 0v2" /></> },
];

export default function App() {
  return (
    <Shell>
      <Global />
      <Header>
        <AppButton aria-label="应用程序菜单">
          <svg width="26" height="36" viewBox="0 0 26 36">
            <path d="M2 2l9-1 9 5c4 4 2 9-4 11l6 12-6 1-7-11-3 13-5 2z" fill="#173a86" />
            <path d="M2 2l9 4-2 13L3 32z" fill="#0d255c" />
            <path d="M9 19l7-2 6 12-5 1z" fill="#2f5fc0" />
            <path d="M11 1l9 5-9 0z" fill="#5f8ae0" />
          </svg>
          <Caret $big $c="#222" />
        </AppButton>
        <TitleBar>
          <Quick>
            <GhostButton aria-label="打开"><Q><path d="M2 15V4h5l2 2h6v2M2 15l4-6h12l-4 6z" fill="#eef1f6" /></Q></GhostButton>
            <GhostButton aria-label="保存"><Q><path d="M3 3h13v14H3z" fill="#59616f" /><path d="M6 3h8v6H6zM6 12h8v5H6z" fill="#fff" /></Q></GhostButton>
            <GhostButton $w={26} aria-label="同步"><Q><path d="M2 6l5-3 5 3v7l-5 3-5-3zM8 9l4-3 5 3v6l-5 3-4-3z" fill="#d0d0d0" stroke="#9a9a9a" /></Q></GhostButton>
            <GhostButton $w={10} aria-label="同步选项"><Caret /></GhostButton>
            <GhostButton aria-label="放弃"><Q><path d="M8 3L2 9l6 5v-3c5-1 7 1 8 5 2-7-2-10-8-10z" fill="#d8d8d8" stroke="#999" /></Q></GhostButton>
            <GhostButton $w={12} aria-label="放弃列表"><Caret /></GhostButton>
            <GhostButton aria-label="重做"><Q><path d="M12 3l6 6-6 5v-3c-5-1-7 1-8 5-2-7 2-10 8-10z" fill="#d8d8d8" stroke="#999" /></Q></GhostButton>
            <GhostButton $w={12} aria-label="重做列表"><Caret /></GhostButton>
            <Vr />
            <GhostButton $w={34} aria-label="测量"><Q><path d="M2 6h16M5 3L2 6l3 3M15 3l3 3-3 3" stroke="#333" strokeWidth="1.500" /><path d="M2 11h16v5H2z" fill="#e8a82c" stroke="#a9741a" /></Q></GhostButton>
            <GhostButton $w={8} aria-label="测量选项"><Caret /></GhostButton>
            <GhostButton $w={26} aria-label="对齐尺寸标注"><Q><path d="M4 16L16 5M3 11l6 6M11 3l6 6" stroke="#444" /><path d="M3 17l1-5 4 4zM17 4l-5 1 4 4z" fill="#444" /></Q></GhostButton>
            <GhostButton $w={22} aria-label="按类别标记"><Q><circle cx="12" cy="8" r="5" fill="#f3f3f3" /><path d="M12 6v5M2 16v-5h5M1 16h3" /></Q></GhostButton>
            <GhostButton $w={22} aria-label="文字"><Q><path d="M4 17L10 3l6 14M6 12h8" stroke="#333" strokeWidth="3" /></Q></GhostButton>
            <Vr />
            <GhostButton $w={36} aria-label="默认三维视图"><Q><path d="M2 9l8-6 8 5v6l-7 4-8-3zM11 18v-7l7-3M11 11L3 8" fill="#eef1f6" /></Q></GhostButton>
            <GhostButton $w={6} aria-label="三维视图选项"><Caret /></GhostButton>
            <GhostButton $w={26} aria-label="剖面"><Q><circle cx="9" cy="10" r="5" fill="#e9edf3" /><path d="M9 3l8 7-8 7c6-4 6-10 0-14z" fill="#333" /></Q></GhostButton>
            <QuickOn $w={24} aria-label="细线"><Q><path d="M2 4h7M2 9h6M2 14h5" stroke="#222" strokeWidth="3" /><path d="M13 4h5M12 10h6M11 15h7" stroke="#333" /><path d="M14 1L7 19" stroke="#3d8ae0" /></Q></QuickOn>
            <Vr />
            <GhostButton $w={36} aria-label="关闭隐藏窗口"><Q><path d="M6 2h9v8M3 5h9v9H3z" fill="#eee" /><RedX x={10} y={10} /></Q></GhostButton>
            <GhostButton $w={16} aria-label="切换窗口"><Q><path d="M8 3h10v7H8z" fill="#fff" /><path d="M3 8h10v9H3z" fill="#fff" stroke="#333" strokeWidth="1.500" /><path d="M3 10h10M4 5V2h3M17 12v4h-3" stroke="#333" /></Q></GhostButton>
            <GhostButton $w={14} aria-label="窗口列表"><Caret /></GhostButton>
            <GhostButton $w={18} aria-label="自定义快速访问工具栏"><svg width="9" height="9" viewBox="0 0 9 9"><path d="M1 1h7" stroke="#333" /><path d="M0 4h9L4.500 8z" fill="#333" /></svg></GhostButton>
          </Quick>
          <Title><span>Autodesk Revit 2016 -</span><span>项目1 - 楼层平面: 标高 1</span></Title>
          <Info>
            <CaretRight />
            <Search placeholder="键入关键字或短语" aria-label="键入关键字或短语" />
            <GhostButton aria-label="搜索"><Q><path d="M3 16V9l2-5h3l1 5v7zM17 16V9l-2-5h-3l-1 5v7zM9 8h2M3 12h5M12 12h5" fill="#eee" strokeWidth="1.500" /></Q></GhostButton>
            <GhostButton aria-label="通讯中心"><Q><path d="M4 4c0 7 5 10 10 8zM9 8l6-5M8 12l-3 5h9l-3-4" fill="#eee" strokeWidth="1.500" /></Q></GhostButton>
            <GhostButton aria-label="收藏夹"><Q><path d="M10 2l2 6h6l-5 4 2 6-5-4-5 4 2-6-5-4h6z" fill="#f4f4f4" /></Q></GhostButton>
            <SignIn><Q><path d="M10 2c4 0 4 4 4 5 0 3-2 4-2 5l5 2v3H3v-3l5-2c0-1-2-2-2-5 0-1 0-5 4-5z" fill="#f4f4f4" /></Q>登录</SignIn>
            <Push />
            <Caret />
            <GhostButton $w={38} aria-label="Exchange Apps"><Q><path d="M3 3h5l3 4 3-4h3v4l-3 3 3 3v4h-5l-2-4-3 4H3v-4l3-3-3-3z" fill="#3f63b8" stroke="#1f3a80" /></Q></GhostButton>
            <Vr />
            <GhostButton $w={34} aria-label="帮助">
              <svg width="18" height="20" viewBox="0 0 18 20"><circle cx="9" cy="10" r="8" fill="#fff" stroke="#555" /><text x="9" y="15" textAnchor="middle" fontSize="13" fontWeight="700" fill="#2356b8" fontFamily="Liberation Sans, sans-serif">?</text></svg>
            </GhostButton>
            <GhostButton $w={10} aria-label="帮助菜单"><Caret /></GhostButton>
          </Info>
          <WinButtons>
            <WinBtn $w={28} aria-label="最小化"><svg width="12" height="6" viewBox="0 0 12 6"><rect x="0.500" y="1.500" width="11" height="3" fill="#fff" stroke="#4a5668" /></svg></WinBtn>
            <WinBtn $w={27} aria-label="还原"><svg width="13" height="12" viewBox="0 0 13 12"><path d="M3.500.5h8v8h-8z" fill="#fff" stroke="#4a5668" /><path d="M1 3h8v8H1z" fill="#fff" stroke="#4a5668" /><path d="M4 6h2v2H4z" fill="none" stroke="#4a5668" /></svg></WinBtn>
            <WinBtn $w={46} $red aria-label="关闭"><X c="#fff" w={3} s={11} /></WinBtn>
          </WinButtons>
        </TitleBar>
        <Tabs>
          {["建筑", "结构", "系统", "插入", "注释", "分析", "体量和场地", "协作", "视图", "管理", "附加模块", "Fuzor Plugin", "修改"].map((t) => (
            <Tab key={t} $on={t === "管理"}>{t}</Tab>
          ))}
          <TabToggle aria-label="最小化功能区">
            <svg width="15" height="10" viewBox="0 0 15 10"><rect x="0.500" y="0.500" width="14" height="9" rx="2" fill="#d8d8d8" stroke="#444" /><path d="M5 7l2.500-3L10 7z" fill="#444" /></svg>
            <Caret />
          </TabToggle>
        </Tabs>
      </Header>

      <Ribbon>
        <Panel $w={50}>
          <PanelBody><Tools items={selectTools} /></PanelBody>
          <PanelTitle>选择 <Caret $big /></PanelTitle>
        </Panel>
        <Panel $w={608}>
          <PanelBody><Tools items={setTools} /><Split /><Tools items={setTools2} /></PanelBody>
          <PanelTitle>设置</PanelTitle>
        </Panel>
        <Panel $w={128}>
          <PanelBody>
            <Tools items={[{ i: "globe", t: "地点", w: 42 }, { i: "coords", t: "坐标", w: 40, d: "below" }, { i: "position", t: "位置", w: 42, d: "below" }]} />
          </PanelBody>
          <PanelTitle>项目位置</PanelTitle>
        </Panel>
        <Panel $w={194}>
          <PanelBody>
            <Tools items={[{ i: "design", t: "设计\n选项", w: 40 }]} />
            <OptionStack>
              <SmallTool><Q s={16}><path d="M2 3h16v10M2 3v8h6M2 6h16" stroke="#aaa" /><path d="M10 9h6v4M2 14h8M7 11l3 3-3 3M12 14h5v4h-5z" stroke="#a0a0a0" /></Q>添加到集</SmallTool>
              <SmallTool><Q s={16}><path d="M2 3h16v5M2 3v14h5M2 6h16M5 10h3M5 13h3" stroke="#aaa" /><path d="M9 17l8-9 2 2-8 8z" stroke="#999" /></Q>拾取以进行编辑</SmallTool>
              <SelectWrap $w="150px">
                <Select aria-label="活动设计选项"><option>主模型</option></Select>
                <Caret $big $c="#777" />
              </SelectWrap>
            </OptionStack>
          </PanelBody>
          <PanelTitle>设计选项</PanelTitle>
        </Panel>
        <Panel $w={157}>
          <PanelBody>
            <Tools items={[{ i: "link", t: "管理\n链接", w: 38 }, { i: "image", t: "管理\n图像", w: 40 }, { i: "decal", t: "贴花\n类型", w: 36 }, { i: "startview", t: "启动\n视图", w: 40 }]} />
          </PanelBody>
          <PanelTitle>管理项目</PanelTitle>
        </Panel>
        <Panel $w={47}>
          <PanelBody><Tools items={[{ i: "phase", t: "阶段", w: 45 }]} /></PanelBody>
          <PanelTitle>阶段化</PanelTitle>
        </Panel>
        <Panel $w={120}>
          <PanelBody><Tools items={[{ i: "save", t: "保存", w: 42 }, { i: "load", t: "载入", w: 34 }, { i: "edit", t: "编辑", w: 42 }]} /></PanelBody>
          <PanelTitle>选择</PanelTitle>
        </Panel>
        <Panel $w={124}>
          <PanelBody><Tools items={[{ i: "ids", t: "选择项\n的 ID", w: 46 }, { i: "byid", t: "按 ID\n选择", w: 34 }, { i: "warn", t: "警告", w: 42 }]} /></PanelBody>
          <PanelTitle>查询</PanelTitle>
        </Panel>
        <Panel $w={89}>
          <PanelBody><Tools items={[{ i: "macro", t: "宏\n管理器", w: 44 }, { i: "shield", t: "宏\n安全性", w: 42 }]} /></PanelBody>
          <PanelTitle>宏</PanelTitle>
        </Panel>
      </Ribbon>
      <OptionsBar />

      <Main>
        <Properties>
          <PaletteHead>属性<GhostButton $w={20} aria-label="关闭属性"><X /></GhostButton></PaletteHead>
          <TypeBox>
            <TypeThumb>
              <svg width="32" height="34" viewBox="0 0 32 34">
                <path d="M1.500 1.500h18v29h-18z" fill="#cdd3dc" stroke="#2b3340" />
                <path d="M12.500 3.500h16v10h-16z" fill="#dde1e8" />
                <path d="M19.500 3.500h9v9" fill="none" stroke="#2b3340" />
                <path d="M12.500 13.500h18v19h-18z" fill="#eef1f5" />
                <path d="M19.500 3.500v9.500h-7v18M19.500 13.500h11" fill="none" stroke="#2b3340" strokeDasharray="2 1" />
                <path d="M12.500 30.500v2h18v-19" fill="none" stroke="#2b3340" />
              </svg>
            </TypeThumb>
            <span>楼层平面</span>
            <Caret $big $c="#555" />
          </TypeBox>
          <Instance>
            <SelectWrap $w="135px">
              <Select $look="raised" $h={25} aria-label="属性过滤器"><option>楼层平面: 标高 1</option></Select>
              <Caret $big $c="#111" />
            </SelectWrap>
            <EditType>
              <Q s={17}><path d="M1 5l2-3h6v7l-1 1H1zM11 5l2-3h6v7M1 13l2-2h6v7H1z" fill="#fff" /><path d="M11 8h8v11h-8z" fill="#dbe6f5" /><path d="M13 11h4M13 14h4M13 16h4" stroke="#2e68b8" strokeWidth="2" /></Q>
              编辑类型
            </EditType>
          </Instance>
          <GridArea>
            <GridClip>
              <PropTable>
                <colgroup><col /><col /></colgroup>
                <tbody>
                  {props.map((p, n) =>
                    p.k === "group" ? (
                      <GroupRow key={n}>
                        <th colSpan={2}>
                          <div>
                            {p.n}
                            <svg width="7" height="9" viewBox="0 0 7 9" fill="none" stroke="#111" strokeWidth="1.500"><path d="M1 4l2.500-3L6 4M1 8l2.500-3L6 8" /></svg>
                          </div>
                        </th>
                      </GroupRow>
                    ) : (
                      <PropRow key={n} $h={p.k === "btn" || p.k === "input" ? 20 : 21} $dim={p.dim}>
                        <th scope="row">{p.n}</th>
                        <td>
                          {p.k === "btn" && <CellButton aria-label={`${p.n} ${p.v}`}>{p.v}</CellButton>}
                          {p.k === "input" && <CellInput aria-label={p.n} defaultValue={p.v} />}
                          {p.k === "chk" && <TickCell><Tick type="checkbox" aria-label={p.n} /></TickCell>}
                          {!p.k && p.v}
                        </td>
                      </PropRow>
                    )
                  )}
                </tbody>
              </PropTable>
            </GridClip>
            <PropScroll $w={15}>
              <CaretUp />
              <Thumb $w={14} $h={630}><Grip /></Thumb>
              <Caret $big />
            </PropScroll>
          </GridArea>
          <PropFoot>
            <Help href="#help">属性帮助</Help>
            <Apply>应用</Apply>
          </PropFoot>
        </Properties>

        <ViewFrame>
          <Canvas>
            <Drawing width="1447" height="863" viewBox="228 172 1447 863" fill="none" stroke="#fff">
              <circle cx="942" cy="231" r="18.500" />
              <path d="M928 244l12 12 12-11c-6 5-18 5-24-1z" fill="#fff" />
              <circle cx="543" cy="581" r="18.500" />
              <path d="M558 569l11 12-12 12c5-6 6-18 1-24z" fill="#fff" />
              <circle cx="1378" cy="580" r="18.500" />
              <path d="M1363 567l-12 12 12 13c-5-6-5-18 0-25z" fill="#fff" />
              <circle cx="942" cy="958" r="18.500" />
              <path d="M929 945l12-14 13 13c-6-5-18-5-25 1z" fill="#fff" />
              <path d="M939 231h2M542 581h2M1377 580h2M941 958h2M937 265h2M573 581h2M1342 580h2M940 922h1" />
            </Drawing>
            <MdiButtons>
              <GhostButton $w={18} aria-label="最小化视图"><svg width="12" height="12" viewBox="0 0 12 12"><path d="M1 9h10" stroke="#fff" strokeWidth="3" /></svg></GhostButton>
              <GhostButton $w={18} aria-label="还原视图"><svg width="12" height="12" viewBox="0 0 12 12" fill="none" stroke="#ddd" strokeWidth="1.500"><path d="M4 3V1h7v8H9M2 4h6v7H2z" /><path d="M4 7h2v2H4z" fill="#fff" /></svg></GhostButton>
              <GhostButton $w={18} aria-label="关闭视图"><X c="#fff" w={3} s={10} /></GhostButton>
            </MdiButtons>
            <NavBar>
              <svg width="26" height="117" viewBox="0 0 26 117" fill="none">
                <circle cx="20" cy="5" r="4" fill="#333" /><path d="M18 3l4 4M22 3l-4 4" stroke="#999" />
                <path d="M0 28q4-6 16-6v14l-4 6h-4q-8-3-8-14z" fill="#9a9ca0" /><circle cx="8" cy="31" r="5" stroke="#6b6e74" strokeWidth="2" />
                <text x="11" y="45" fontSize="10" fontWeight="700" fill="#2f5278" fontFamily="Liberation Sans, sans-serif">2D</text>
                <path d="M0 59h23" stroke="#3a3a3a" />
                <path d="M2 68h11v9H5z" fill="#6c9450" /><circle cx="13" cy="78" r="3" fill="#aaa" />
                <circle cx="20" cy="112" r="4" fill="#333" /><path d="M18 111h4M18 113l2 2 2-2" stroke="#999" />
              </svg>
            </NavBar>

            <Dialog role="dialog" aria-label="选择要复制的项目">
              <DialogHead>
                <h3>选择要复制的项目</h3>
                <CloseRed aria-label="关闭"><X c="#f4f4f4" w={3} s={10} /></CloseRed>
              </DialogHead>
              <DialogBody>
                <FromRow>
                  复制自:
                  <SelectWrap $w="165px">
                    <Select $look="mono" $h={21}><option>Residential_Sample_Project</option></Select>
                    <Caret $big $c="#222" />
                  </SelectWrap>
                </FromRow>
                <ListBox>
                  <ListClip>
                    <CheckList>
                      {copyItems.map((t) => (
                        <li key={t}><label><Tick type="checkbox" defaultChecked />{t}</label></li>
                      ))}
                    </CheckList>
                  </ListClip>
                  <ListV $w={18}>
                    <CaretUp />
                    <Thumb $w={15} $h={21}><Grip /></Thumb>
                    <Caret $big />
                  </ListV>
                  <ListH><CaretLeft /><CaretRight $c="#888" /></ListH>
                </ListBox>
                <SideButtons>
                  <DialogButton>选择全部<span>(A)</span></DialogButton>
                  <DialogButton>放弃全部<span>(N)</span></DialogButton>
                </SideButtons>
                <Footer>
                  <DialogButton $w={88} $main>确定<span>(O)</span></DialogButton>
                  <DialogButton $w={88}>取消<span>(C)</span></DialogButton>
                </Footer>
              </DialogBody>
            </Dialog>

            <Mark $x={617} $y={210} $w={192} $h={46} $r={8} />
            <Mark $x={523} $y={252} $w={164} $h={254} $r={30} />
            <Callout $x={903} $y={25}><Dashes />选择样例项目文件</Callout>
            <Callout $x={10} $y={638}><Dashes />选择样例项目里需要传递的选项</Callout>
            <Drawing width="1447" height="863" viewBox="228 172 1447 863" fill="none" stroke="#ffff00" strokeWidth="6" pointerEvents="none">
              <path d="M941 385V258H1127" strokeDasharray="24 18" />
              <path d="M833 676V743H496V785" strokeDasharray="24 18" />
              <path d="M1107 247L1126 258 1107 270M486 785L496 805 507 785" strokeLinecap="round" />
            </Drawing>
          </Canvas>
          <VScroll $w={16}><CaretUp /><Thumb $w={14} $h={15} /><Caret $big /></VScroll>
          <ViewBar>
            <ScaleText>1  :  100</ScaleText>
            {viewIcons.map((ic) => (
              <GhostButton key={ic.n} $w={21} aria-label={ic.n}><Q s={18}>{ic.art}</Q></GhostButton>
            ))}
            <HScroll><CaretLeft /><Thumb $w={15} $h={16} /><CaretRight /></HScroll>
          </ViewBar>
        </ViewFrame>

        <Browser>
          <PaletteHead>项目浏览器 - 项目1<GhostButton $w={20} aria-label="关闭项目浏览器"><X /></GhostButton></PaletteHead>
          <TreeBox>
            <Tree>
              {tree.map((n, k) => (
                <Node key={n.t} $last={k === tree.length - 1}>
                  {n.sub && <Indent />}
                  <Expander $leaf={!n.e} aria-label={`${n.t} 展开`}>
                    {n.e && (
                      <svg width="7" height="7" viewBox="0 0 7 7"><path d={n.e === "+" ? "M1 3.500h5M3.500 1v5" : "M1 3.500h5"} stroke="#2b4fa0" /></svg>
                    )}
                  </Expander>
                  <Twig $w={n.sub ? 9 : 6} />
                  {n.icon && <svg width="16" height="16" viewBox="0 0 16 16" fill="none" stroke="#555c68">{treeArt[n.icon]}</svg>}
                  {!n.sub && <Twig $w={2} />}
                  <NodeText $on={n.on}>{n.t}</NodeText>
                </Node>
              ))}
            </Tree>
          </TreeBox>
        </Browser>
      </Main>

      <Status>
        就绪
        <Push />
        <StatusTools>
          <Q s={20}><path d="M3 16V9h4v7M12 16V8h3v8M9 17v-5M6 7a3 3 0 0 1 6-3" stroke="#a4a4a4" strokeWidth="2" /></Q>
          <SelectWrap $w="206px"><Select $h={20} aria-label="活动工作集"><option></option></Select><Caret $big $c="#999" /></SelectWrap>
          <Q s={20}><path d="M5 2h10l-3 7-3 1-3 8M5 2v6h8" stroke="#a4a4a4" strokeWidth="2" /></Q>
          <StatusCount>:0</StatusCount>
          <Q s={24}><path d="M3 3h14v15H3z" fill="#a6a6a6" stroke="none" /></Q>
          <Q s={24}><path d="M3 3h14v15H3z" fill="#a6a6a6" stroke="none" /><path d="M6 6l7 9M13 9v6H8" stroke="#eee" /></Q>
          <SelectWrap $w="156px"><Select $h={20} aria-label="设计选项"><option>主模型</option></Select><Caret $big $c="#999" /></SelectWrap>
        </StatusTools>
        <StatusRight>
          <Q s={20}><path d="M5 8a3 3 0 1 1 5-3 3 3 0 1 1 5 3l-4 2v7H9v-7z" fill="#a0a0a0" stroke="none" /></Q>
          <Q s={20}><path d="M2 14L12 3l6 8-3 6z" fill="#a0a0a0" stroke="none" /></Q>
          <Q s={20}><path d="M4 6l8 10M12 10v6H6" stroke="#a0a0a0" strokeWidth="2" /></Q>
          <Q s={20}><path d="M3 12h12v5H3z" fill="#a0a0a0" stroke="none" /></Q>
          <Q s={20}><path d="M6 3l8 12-5-1-3 4z" fill="#a0a0a0" stroke="none" /></Q>
          <StatusCount>:0</StatusCount>
        </StatusRight>
        <Watermark href="#www.eeeetop.com">www.eeeetop.com</Watermark>
      </Status>
    </Shell>
  );
}
